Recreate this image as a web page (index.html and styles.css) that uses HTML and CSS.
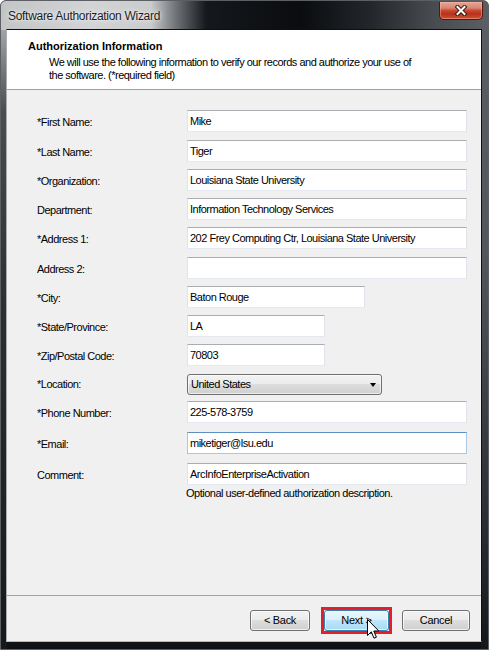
FILE: index.html
```html
<!DOCTYPE html>
<html>
<head>
<meta charset="utf-8">
<link rel="stylesheet" href="styles.css">
</head>
<body>
<div class="window">
  <div class="titlebar">
    <span class="title">Software Authorization Wizard</span>
    <div class="close">
      <svg width="14" height="11" viewBox="0 0 14 11">
        <path d="M3.5 2 L10.5 9 M10.5 2 L3.5 9" stroke="#3b1a12" stroke-width="4" stroke-linecap="square" fill="none"/>
        <path d="M3.5 2 L10.5 9 M10.5 2 L3.5 9" stroke="#ffffff" stroke-width="2" stroke-linecap="square" fill="none"/>
      </svg>
    </div>
  </div>
  <div class="client">
    <div class="header">
      <div class="h-title">Authorization Information</div>
      <div class="h-desc">We will use the following information to verify our records and authorize your use of<br>the software. (*required field)</div>
    </div>
    <div class="body">
      <div class="form">
        <div class="lbl">*First Name:</div><div class="tb w-full">Mike</div>
        <div class="lbl">*Last Name:</div><div class="tb w-full">Tiger</div>
        <div class="lbl">*Organization:</div><div class="tb w-full">Louisiana State University</div>
        <div class="lbl">Department:</div><div class="tb w-full">Information Technology Services</div>
        <div class="lbl">*Address 1:</div><div class="tb w-full">202 Frey Computing Ctr, Louisiana State University</div>
        <div class="lbl">Address 2:</div><div class="tb w-full"></div>
        <div class="lbl">*City:</div><div class="tb w-city">Baton Rouge</div>
        <div class="lbl">*State/Province:</div><div class="tb w-small">LA</div>
        <div class="lbl">*Zip/Postal Code:</div><div class="tb w-small">70803</div>
        <div class="lbl lbl-combo">*Location:</div>
        <div class="combo"><span>United States</span><span class="arrow"></span></div>
        <div class="lbl">*Phone Number:</div><div class="tb w-full">225-578-3759</div>
        <div class="lbl">*Email:</div><div class="tb w-full focus">miketiger@lsu.edu</div>
        <div class="lbl">Comment:</div><div class="tb w-full">ArcInfoEnterpriseActivation</div>
        <div class="note">Optional user-defined authorization description.</div>
      </div>
    </div>
    <div class="sep"></div>
    <div class="buttons">
      <div class="btn btn-back">&lt; Back</div>
      <div class="hl"><div class="btn btn-next hover">Next &gt;</div></div>
      <div class="btn btn-cancel">Cancel</div>
    </div>
  </div>
  <svg class="cursor" width="13" height="21" viewBox="0 0 13 21">
    <path d="M0.5 0.5 L0.5 16.5 L4.3 12.8 L7 19.2 L9.4 18.2 L6.8 12 L11.8 12 Z" fill="#ffffff" stroke="#000000" stroke-width="1" stroke-linejoin="miter"/>
  </svg>
</div>
</body>
</html>
```

FILE: styles.css
```css
html, body {
  margin: 0;
  padding: 0;
  background: #ffffff;
}

.window {
  position: relative;
  width: 489px;
  height: 650px;
  box-sizing: border-box;
  border: 1px solid #5c6064;
  border-radius: 6px 6px 0 0;
  padding: 0 6px 7px 5px;
  display: flex;
  flex-direction: column;
  background:
    linear-gradient(to right, #c2c4c6 0px, #d2d4d6 90px, #c9cbcd 150px, #6f7276 175px, #15181c 205px, #0a0c0f 300px, #23272b 370px, #474b4f 430px, #5b5f63 487px) left top / 100% 29px no-repeat,
    linear-gradient(to bottom, #c0c2c4 0px, #8a8d90 50px, #4a4d50 110px, #2d3033 300px, #16191c 650px) left top / 6px 100% no-repeat,
    linear-gradient(to bottom, #5b5f63 0px, #53575b 250px, #2e3236 500px, #15181b 650px) right top / 7px 100% no-repeat,
    #0f1215;
  font-family: "Liberation Sans", Arial, sans-serif;
  color: #000;
}

.titlebar {
  height: 28px;
  margin: 0 -6px 0 -5px;
  display: flex;
  align-items: flex-start;
}

.title {
  font-family: "Liberation Sans", Arial, sans-serif;
  font-size: 12px;
  letter-spacing: -0.3px;
  color: #1b1b1b;
  line-height: 28px;
  padding: 1px 0 0 7px;
  text-shadow: 0 0 6px rgba(255, 255, 255, 0.9), 0 0 2px rgba(255, 255, 255, 0.8);
}

.close {
  margin-left: auto;
  margin-right: 5px;
  margin-top: 1px;
  width: 44px;
  height: 18px;
  box-sizing: border-box;
  border: 1px solid #4e1a10;
  border-top: none;
  border-radius: 0 0 5px 5px;
  background: linear-gradient(to bottom, #e2a898 0%, #d98672 35%, #c84a33 50%, #b8301a 70%, #cf5235 100%);
  box-shadow: inset 0 0 0 1px rgba(255, 190, 170, 0.45);
  display: flex;
  align-items: center;
  justify-content: center;
}

.close svg {
  display: block;
}

.client {
  flex: 1;
  display: flex;
  flex-direction: column;
  background: #f0f0f0;
  border: 1px solid #0d1013;
  border-left-color: #a9abad;
  border-bottom-color: #b4b6b8;
}

.header {
  height: 60px;
  box-sizing: border-box;
  background: #ffffff;
  border-bottom: 1px solid #a0a0a0;
  padding: 10px 0 0 21px;
  flex: none;
}

.h-title {
  font-weight: bold;
  font-size: 11px;
  line-height: 13px;
}

.h-desc {
  font-size: 11px;
  line-height: 13px;
  letter-spacing: -0.5px;
  margin: 3px 0 0 21px;
}

.body {
  flex: 1;
}

.form {
  display: grid;
  grid-template-columns: 150px 1fr;
  grid-template-rows: 30px 29px 29px 29px 30px 29px 29px 29px 30px 27px 31px 31px 24px auto;
  padding: 20px 0 0 30px;
  font-size: 11px;
  letter-spacing: -0.5px;
}

.lbl {
  padding-top: 6px;
  line-height: 13px;
}

.lbl-combo {
  padding-top: 4px;
}

.tb {
  height: 22px;
  box-sizing: border-box;
  background: #ffffff;
  border: 1px solid #e2e3ea;
  border-top-color: #abadb3;
  border-bottom-color: #e3e9ef;
  padding: 0 2px;
  line-height: 20px;
  white-space: nowrap;
  overflow: hidden;
}

.tb.focus {
  border-color: #a8c6e6;
  border-top-color: #5c8fc6;
}

.w-full { width: 280px; }
.w-city { width: 178px; }
.w-small { width: 138px; }

.combo {
  width: 195px;
  height: 21px;
  box-sizing: border-box;
  border: 1px solid #707070;
  border-radius: 3px;
  background: linear-gradient(to bottom, #f2f2f2 0%, #ebebeb 50%, #dddddd 50%, #cfcfcf 100%);
  box-shadow: inset 0 0 0 1px rgba(255, 255, 255, 0.6);
  display: flex;
  align-items: center;
  padding: 0 0 0 3px;
  line-height: 19px;
}

.combo .arrow {
  margin-left: auto;
  margin-right: 5px;
  width: 0;
  height: 0;
  border-left: 3.5px solid transparent;
  border-right: 3.5px solid transparent;
  border-top: 4px solid #000;
}

.note {
  grid-column: 2;
  line-height: 13px;
  margin-left: -1px;
}

.sep {
  height: 1px;
  background: #a0a0a0;
  flex: none;
}

.buttons {
  height: 45px;
  box-sizing: border-box;
  flex: none;
  display: flex;
  justify-content: flex-end;
  align-items: flex-start;
  padding: 11px 11px 0 0;
}

.btn {
  height: 21px;
  box-sizing: border-box;
  border: 1px solid #707070;
  border-radius: 3px;
  background: linear-gradient(to bottom, #f2f2f2 0%, #ebebeb 50%, #dddddd 50%, #cfcfcf 100%);
  box-shadow: inset 0 0 0 1px rgba(255, 255, 255, 0.7);
  font-size: 11px;
  letter-spacing: -0.3px;
  line-height: 19px;
  text-align: center;
}

.btn-back {
  width: 60px;
  margin-top: 3px;
}

.hl {
  border: 3px solid #e0202b;
  margin-left: 11px;
}

.btn-next {
  width: 65px;
}

.btn.hover {
  border-color: #3c7fb1;
  background: linear-gradient(to bottom, #eaf6fd 0%, #d9f0fc 50%, #bee6fd 50%, #a7d9f5 100%);
}

.btn-cancel {
  width: 68px;
  margin-top: 3px;
  margin-left: 10px;
}

.cursor {
  position: absolute;
  left: 366px;
  top: 618px;
}
```
